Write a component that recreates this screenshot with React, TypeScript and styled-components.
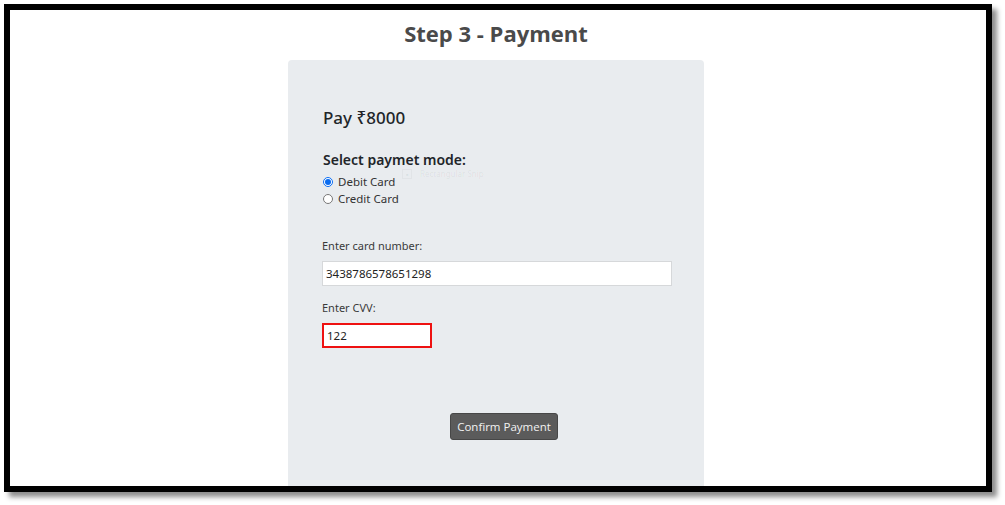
import React from "react";
import styled, { createGlobalStyle } from "styled-components";

const Global = createGlobalStyle`
  html, body { margin: 0; padding: 0; background: #ffffff; }
  body { font-family: "Open Sans", "Noto Sans", sans-serif; }
  * { box-sizing: border-box; }
`;

const Page = styled.div`
  width: 1005px;
  height: 505px;
  padding: 4px;
  background: #ffffff;
`;

const Frame = styled.div`
  width: 988px;
  height: 488px;
  border: 6px solid #000000;
  box-shadow: 5px 5px 5px rgba(0, 0, 0, 0.45);
  background: #ffffff;
  overflow: hidden;
  display: flex;
  flex-direction: column;
  align-items: center;
  padding-right: 4px;
`;

const Title = styled.h2`
  margin: 8px 0 0 0;
  font-family: "Open Sans", sans-serif;
  font-weight: 700;
  font-size: 22px;
  line-height: 30px;
  color: #4a4a4a;
`;

const Card = styled.div`
  position: relative;
  margin-top: 12px;
  width: 416px;
  flex: 1;
  background: #e9ecef;
  border-radius: 4px 4px 0 0;
  padding: 46px 34px 0 34px;
  display: flex;
  flex-direction: column;
  align-items: stretch;
`;

const Amount = styled.h3`
  margin: 0 0 0 1px;
  font-family: "Noto Sans", "Open Sans", sans-serif;
  font-weight: 500;
  font-size: 17px;
  line-height: 24px;
  color: #212529;
`;

const ModeHeading = styled.h4`
  margin: 20px 0 0 1px;
  font-family: "Noto Sans", sans-serif;
  font-weight: 600;
  font-size: 14px;
  line-height: 20px;
  color: #212529;
`;

const RadioGroup = styled.div`
  margin-top: 3px;
  display: flex;
  flex-direction: column;
`;

const RadioRow = styled.label`
  display: flex;
  align-items: center;
  gap: 5px;
  height: 17px;
  font-family: "Noto Sans", sans-serif;
  font-size: 11.5px;
  color: #333333;
`;

const Radio = styled.input`
  width: 10px;
  height: 10px;
  margin: 0 0 0 1px;
  accent-color: #0a6cf0;
`;

const FieldLabel = styled.label<{ $gap: number }>`
  display: block;
  margin-top: ${(p) => p.$gap}px;
  font-family: "Noto Sans", sans-serif;
  font-size: 11px;
  line-height: 16px;
  color: #3a3a3a;
`;

const TextInput = styled.input<{ $width?: number; $error?: boolean }>`
  display: block;
  margin-top: 7px;
  width: ${(p) => (p.$width ? `${p.$width}px` : "350px")};
  height: 25px;
  padding: 0 3px;
  border: ${(p) => (p.$error ? "2px solid #ee1111" : "1px solid #d6d8da")};
  background: #ffffff;
  font-family: "Noto Sans", sans-serif;
  font-size: 11.5px;
  color: #222222;
  outline: none;
  border-radius: 0;
`;

const ButtonRow = styled.div`
  display: flex;
  justify-content: center;
  margin-top: 65px;
  padding-left: 16px;
`;

const ConfirmButton = styled.button`
  width: 108px;
  height: 27px;
  padding: 0;
  white-space: nowrap;
  background: #5b5b5b;
  border: 1px solid #474747;
  border-radius: 3px;
  color: #f2f2f2;
  font-family: "Open Sans", sans-serif;
  font-size: 11.5px;
  cursor: pointer;
`;

const Ghost = styled.div`
  position: absolute;
  left: 114px;
  top: 107px;
  height: 14px;
  display: flex;
  align-items: center;
  gap: 8px;
  font-family: "Noto Sans", sans-serif;
  font-size: 8px;
  line-height: 10px;
  color: rgba(0, 0, 0, 0.06);
  pointer-events: none;
  white-space: nowrap;
`;

const GhostIcon = styled.span`
  width: 10px;
  height: 10px;
  border: 1px solid rgba(0, 0, 0, 0.03);
  display: flex;
  align-items: center;
  justify-content: center;
  font-size: 5px;
`;

export default function App() {
  return (
    <Page>
      <Global />
      <Frame>
        <Title>Step 3 - Payment</Title>
        <Card>
          <Amount>Pay ₹8000</Amount>
          <ModeHeading>Select paymet mode:</ModeHeading>
          <RadioGroup>
            <RadioRow>
              <Radio type="radio" name="mode" defaultChecked />
              Debit Card
            </RadioRow>
            <RadioRow>
              <Radio type="radio" name="mode" />
              Credit Card
            </RadioRow>
          </RadioGroup>
          <FieldLabel $gap={31}>Enter card number:</FieldLabel>
          <TextInput type="text" defaultValue="3438786578651298" />
          <FieldLabel $gap={14}>Enter CVV:</FieldLabel>
          <TextInput type="text" defaultValue="122" $width={110} $error />
          <ButtonRow>
            <ConfirmButton>Confirm Payment</ConfirmButton>
          </ButtonRow>
          <Ghost>
            <GhostIcon>■</GhostIcon>
            Rectangular Snip
          </Ghost>
        </Card>
      </Frame>
    </Page>
  );
}
